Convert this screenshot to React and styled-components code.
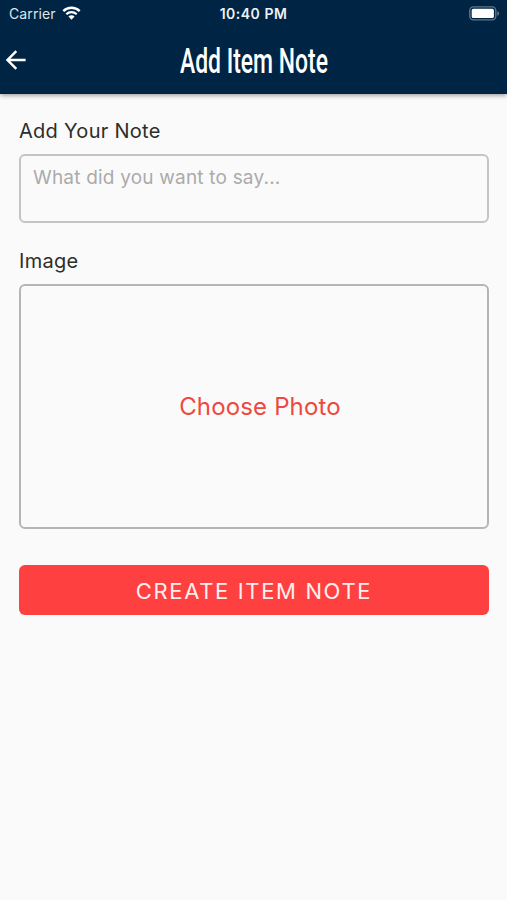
import { useState } from 'react';
import styled, { createGlobalStyle } from 'styled-components';

const App = () => {
  const [note, setNote] = useState('');

  const handleSubmit = e => {
    e.preventDefault();
  };

  return (
    <Screen>
      <GlobalStyle />
      <Header>
        <StatusBar>
          <Carrier>
            Carrier
            <WifiIcon />
          </Carrier>
          <Time>10:40 PM</Time>
          <BatteryIcon />
        </StatusBar>
        <NavBar>
          <BackButton type="button" aria-label="Back">
            <ArrowIcon />
          </BackButton>
          <Title>Add Item Note</Title>
        </NavBar>
      </Header>
      <Form onSubmit={handleSubmit}>
        <Label htmlFor="note">Add Your Note</Label>
        <NoteInput
          id="note"
          name="note"
          placeholder="What did you want to say..."
          onChange={e => setNote(e.target.value)}
          value={note}
        />
        <Label as="span">Image</Label>
        <PhotoButton type="button">Choose Photo</PhotoButton>
        <SubmitButton type="submit">CREATE ITEM NOTE</SubmitButton>
      </Form>
    </Screen>
  );
};

export default App;

const WifiIcon = () => (
  <svg width="19" height="14" viewBox="0 0 19 14" fill="none">
    <path d="M1.300 5.100a11.800 11.800 0 0 1 16.400 0" stroke="#fff" strokeWidth="2.4" />
    <path d="M4.300 8.200a7.500 7.500 0 0 1 10.400 0" stroke="#fff" strokeWidth="2.2" />
    <path d="M9.500 13.700 6.400 10.600a4.400 4.400 0 0 1 6.200 0Z" fill="#fff" />
  </svg>
);

const BatteryIcon = () => (
  <svg width="31" height="15" viewBox="0 0 31 15" fill="none">
    <rect x="0.8" y="0.9" width="26" height="13" rx="3.6" stroke="#5f7689" strokeWidth="1.4" />
    <rect x="2.7" y="2.8" width="22.2" height="9.2" rx="1.6" fill="#fff" />
    <path d="M28.300 5v4.800c1-.4 1.900-1.300 1.900-2.400S29.300 5.400 28.300 5Z" fill="#5f7689" />
  </svg>
);

const ArrowIcon = () => (
  <svg width="20" height="20" viewBox="0 0 20 20" fill="none">
    <path d="M19.600 10H1.800M10.300 1.100 1.500 10l8.800 8.900" stroke="#fff" strokeWidth="2.4" />
  </svg>
);

const GlobalStyle = createGlobalStyle`
  body {
    margin: 0;
    background: #fafafa;
  }
  * {
    box-sizing: border-box;
  }
`;

const Screen = styled.div`
  min-height: 900px;
  background: #fafafa;
  color: #2d2d2d;
  font-family: 'Inter', sans-serif;
`;

const Header = styled.header`
  height: 94px;
  color: #ffffff;
  background: #002444;
  box-shadow: 0 1px 5px rgba(0, 0, 0, 0.45);
`;

const StatusBar = styled.div`
  height: 26px;
  padding: 0 7px 0 9px;
  display: grid;
  grid-template-columns: 1fr auto 1fr;
  align-items: center;
  font-size: 14px;
  > :last-child {
    justify-self: end;
  }
`;

const Carrier = styled.div`
  display: flex;
  align-items: center;
  gap: 6px;
  color: #dfe5ea;
  letter-spacing: 0.1px;
`;

const Time = styled.div`
  font-weight: 600;
  font-size: 14px;
  letter-spacing: 0.5px;
  margin-right: 2px;
  color: #eef2f5;
`;

const NavBar = styled.div`
  height: 68px;
  padding: 0 6px;
  display: grid;
  grid-template-columns: 20px 1fr 20px;
  align-items: center;
`;

const BackButton = styled.button`
  height: 20px;
  padding: 0;
  border: none;
  background: none;
  cursor: pointer;
  margin-bottom: 1px;
  svg {
    display: block;
  }
`;

const Title = styled.h1`
  margin: 4px 0 0;
  justify-self: center;
  font-family: 'Roboto', sans-serif;
  font-size: 35px;
  font-weight: 500;
  line-height: 64px;
  white-space: nowrap;
  transform: scaleX(0.655);
`;

const Form = styled.form`
  padding: 24px 18px 0 19px;
  display: flex;
  flex-direction: column;
`;

const Label = styled.label`
  height: 26px;
  line-height: 26px;
  margin-bottom: 10px;
  font-size: 20px;
  letter-spacing: 0.28px;
`;

const NoteInput = styled.textarea`
  height: 69px;
  margin: 0 0 25px;
  padding: 10px 12px;
  border: 2px solid #c4c4c4;
  border-radius: 6px;
  outline: none;
  resize: none;
  background: transparent;
  color: inherit;
  font-family: inherit;
  font-size: 19px;
  line-height: 24px;
  letter-spacing: 0.2px;
  &::placeholder {
    color: #ababab;
  }
`;

const PhotoButton = styled.button`
  height: 245px;
  padding: 0 0 0 12px;
  border: 2px solid #b5b5b5;
  border-radius: 6px;
  background: transparent;
  color: #ee4840;
  font-family: inherit;
  font-size: 24px;
  letter-spacing: 0.15px;
  cursor: pointer;
`;

const SubmitButton = styled.button`
  height: 50px;
  margin-top: 36px;
  padding: 2px 0 0;
  border: none;
  border-radius: 6px;
  background: #ff4040;
  color: #ffeeee;
  font-family: inherit;
  font-size: 22px;
  letter-spacing: 1.65px;
  cursor: pointer;
`;
